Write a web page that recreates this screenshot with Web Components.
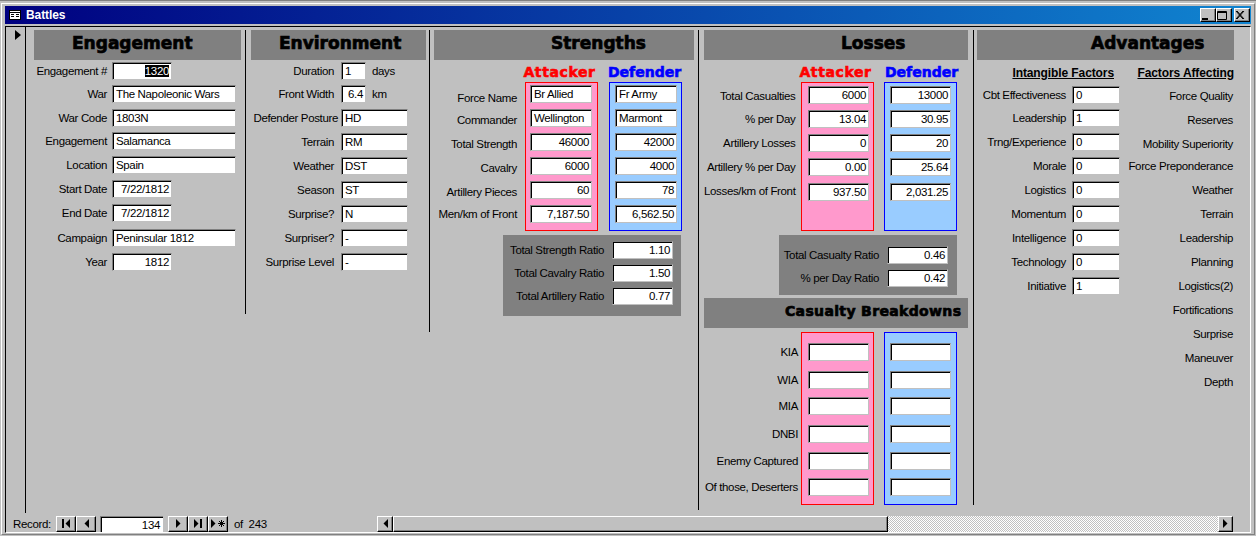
<!doctype html>
<html><head><meta charset="utf-8"><style>
html,body{margin:0;padding:0;background:#c0c0c0;}
body{width:1256px;height:536px;overflow:hidden;font:11.5px "Liberation Sans",Arial,sans-serif;letter-spacing:-.35px;color:#000;}
</style></head><body>
<template id="t-window"><style>
:host{display:flex;flex-direction:column;width:1256px;height:536px;box-sizing:border-box;background:#c0c0c0;padding:2px 1px 1px 1px;border-top:1px solid #808080}
.outer{flex:1;display:flex;flex-direction:column;border:1px solid;border-color:#fff #808080 #808080 #fff;padding:2px 3px 1px 3px;min-height:0}
.title{height:18px;flex:none;display:flex;align-items:center;background:linear-gradient(90deg,#000080,#1084d0);color:#fff;font:bold 12px "Liberation Sans",Arial,sans-serif;letter-spacing:-.1px;padding:0 1px 0 4px;}
.title svg{margin-right:5px;flex:none}
.title span{flex:1}
.client{flex:1;min-height:0;margin-top:2px;border:1px solid;border-color:#000 #fff #fff #000;display:flex;flex-direction:column}
.main{flex:1;display:flex;min-height:0}
.sel{width:10px;flex:none;border-right:1px solid #000;padding:3px 0 0 9px;box-sizing:content-box;height:calc(100% - 5px)}
.sel svg{display:block}
.canvas{flex:1;min-width:0;}
.foot{height:17px;flex:none}
.tb{width:16px;height:14px;background:#c0c0c0;border:1px solid;border-color:#fff #000 #000 #fff;box-sizing:border-box;box-shadow:inset -1px -1px 0 #808080;display:flex;align-items:center;justify-content:center}
.tb.x{margin-left:2px}
</style><div class="outer">
<div class="title"><svg width="12" height="10" viewBox="0 0 12 10"><rect x=".5" y=".5" width="11" height="9" fill="#fff" stroke="#000"/><path d="M1 2.500h10" stroke="#000"/><path d="M2 4.500h3M2 6.500h3M7 4.500h3M7 6.500h3" stroke="#000"/></svg><span></span>
<div class="tb"><svg width="10" height="9"><rect x="1" y="7" width="6" height="2"/></svg></div><div class="tb"><svg width="10" height="9"><path d="M.5 .5h9v8h-9z M.5 1.500h9" fill="none" stroke="#000"/></svg></div><div class="tb x"><svg width="10" height="9"><path d="M1 0l7 8M2 0l7 8M8 0L1 8M9 0L2 8" stroke="#000" fill="none" stroke-width="1"/></svg></div></div>
<div class="client"><div class="main"><div class="sel"><svg width="7" height="10"><path d="M0 0l6 5L0 10z"/></svg></div><div class="canvas"><slot></slot></div></div><div class="foot"><slot name="foot"></slot></div></div>
</div></template>

<template id="t-canvas"><style>
:host{display:flex;align-items:flex-start;padding-left:8px;height:100%;box-sizing:border-box;padding-top:3px}
</style><slot></slot></template>

<template id="t-divider"><style>:host{display:block;flex:none;width:1px;background:#000}</style></template>

<template id="t-section"><style>
:host{display:block;flex:none}
h2{margin:0;height:30px;background:#808080;display:flex;align-items:center;box-sizing:border-box;padding-bottom:4px;font:bold 17px "DejaVu Sans",sans-serif;letter-spacing:0;-webkit-text-stroke:.7px #000;white-space:nowrap}
</style><h2></h2><slot></slot></template>

<template id="t-rows"><style>
:host{display:grid;grid-auto-rows:24px;align-items:start}
</style><slot></slot></template>

<template id="t-field"><style>
:host{display:flex;align-items:center;height:18px;white-space:nowrap}
.l{flex:none;text-align:right;}
.s{margin-left:6px}
</style><span class="l"></span><x-input></x-input><span class="s"></span></template>

<template id="t-label"><style>
:host{display:block;height:18px;line-height:18px;text-align:right;white-space:nowrap}
</style><slot></slot></template>

<template id="t-input"><style>
:host{display:block;flex:none;height:18px;box-sizing:border-box;background:#fff;border:1px solid;border-color:#808080 #c0c0c0 #c0c0c0 #808080;box-shadow:inset 1px 1px 0 #000;font:11.5px "Liberation Sans",Arial,sans-serif;letter-spacing:-.35px;line-height:14px;padding:1px 2px 0 3px;overflow:hidden;white-space:nowrap}
:host([align=right]){text-align:right}
::slotted(mark){background:#000;color:#fff}
</style><slot></slot></template>

<template id="t-panel"><style>
:host{display:block;box-sizing:border-box;flex:none;border:1px solid}
:host([tone=a]){background:#ff99cc;border-color:#f00}
:host([tone=d]){background:#99ccff;border-color:#00f}
:host([tone=g]){background:#808080;border-color:#808080}
</style><slot></slot></template>

<template id="t-side"><style>
:host{display:block;text-align:center;font:bold 14px "DejaVu Sans",sans-serif;-webkit-text-stroke:.6px currentColor;letter-spacing:0;white-space:nowrap}
:host([tone=a]){color:#f00;letter-spacing:.6px}
:host([tone=d]){color:#00f}
</style><slot></slot></template>

<template id="t-sub"><style>
:host{display:block;font:bold 12px "Liberation Sans",Arial,sans-serif;letter-spacing:-.1px;text-decoration:underline;text-align:right;white-space:nowrap;height:16px;line-height:16px}
</style><slot></slot></template>

<template id="t-navbtn"><style>
:host{display:flex;align-items:center;justify-content:center;flex:none;width:20px;height:16px;box-sizing:border-box;background:#c0c0c0;border:1px solid;border-color:#fff #000 #000 #fff;box-shadow:inset -1px -1px 0 #808080}
</style><slot></slot></template>

<template id="t-nav"><style>
:host{display:flex;align-items:center;height:17px;padding-left:7px;white-space:nowrap;}
.rec{width:43px;flex:none}
.box{width:63px;height:16px;box-sizing:border-box;background:#fff;margin:0 5px 0 4px;border-top:1px solid #808080;border-left:1px solid #808080;box-shadow:inset 1px 1px 0 #000;text-align:right;padding:1px 3px 0 0;line-height:15px;flex:none}
.of{margin-left:6px;flex:none;width:143px}
.track{flex:1;margin:0 17px 0 0;display:flex;height:16px;min-width:0}
.thumb{width:495px;flex:none;background:#c0c0c0;border:1px solid;border-color:#fff #000 #000 #fff;box-shadow:inset -1px -1px 0 #808080;box-sizing:border-box}
.dith{flex:1;background:repeating-conic-gradient(#fff 0 25%,#c0c0c0 0 50%) 0 0/2px 2px}
</style><span class="rec">Record:</span>
<x-navbtn><svg width="8" height="9"><path d="M0 0h2v9H0zM8 0v9L3.500 4.500z"/></svg></x-navbtn><x-navbtn><svg width="5" height="9"><path d="M5 0v9L.500 4.500z"/></svg></x-navbtn>
<div class="box">134</div>
<x-navbtn><svg width="5" height="9"><path d="M0 0v9l4.500-4.500z"/></svg></x-navbtn><x-navbtn><svg width="8" height="9"><path d="M0 0v9l4.500-4.500zM6 0h2v9H6z"/></svg></x-navbtn><x-navbtn><svg width="15" height="9"><path d="M0 0v9l4.500-4.500z"/><path d="M10.500 1v7M7 4.500h7M8 2l5 5M13 2L8 7" stroke="#000" fill="none"/></svg></x-navbtn>
<span class="of">of&nbsp; 243</span>
<x-navbtn style="width:16px"><svg width="5" height="9"><path d="M5 0v9L.500 4.500z"/></svg></x-navbtn>
<div class="track"><div class="thumb"></div><div class="dith"></div><x-navbtn style="width:15px"><svg width="5" height="9"><path d="M0 0v9l4.500-4.500z"/></svg></x-navbtn></div>
</template>

<script>
function def(tag,tid,init){customElements.define(tag,class extends HTMLElement{constructor(){super();this.attachShadow({mode:'open'}).appendChild(document.getElementById(tid).content.cloneNode(true));}connectedCallback(){if(init)init(this,this.shadowRoot);}});}
def('x-input','t-input');
def('x-window','t-window',(h,s)=>{s.querySelector('.title span').textContent=h.getAttribute('caption');});
def('x-canvas','t-canvas');
def('x-divider','t-divider',(h)=>{h.style.height=h.getAttribute('h')+'px';});
def('x-section','t-section',(h,s)=>{h.style.width=h.getAttribute('w')+'px';const t=s.querySelector('h2');t.textContent=h.getAttribute('heading');t.style.paddingLeft=h.getAttribute('pl')+'px';if(h.hasAttribute('fs'))t.style.fontSize=h.getAttribute('fs')+'px';if(h.hasAttribute('ls'))t.style.letterSpacing=h.getAttribute('ls')+'px';});
def('x-rows','t-rows',(h)=>{if(h.hasAttribute('rows'))h.style.gridTemplateRows=h.getAttribute('rows');});
def('x-label','t-label');
def('x-sub','t-sub');
def('x-field','t-field',(h,s)=>{
 const p=h.parentElement,g=n=>h.getAttribute(n)||p.getAttribute(n);
 const l=s.querySelector('.l');l.textContent=h.getAttribute('label')||'';l.style.width=(g('lw')||0)+'px';l.style.marginRight=(g('g')||0)+'px';
 const i=s.querySelector('x-input');
 if(g('w'))i.style.width=g('w')+'px';
 const v=h.getAttribute('v')||'';
 if(h.hasAttribute('sel')){const m=document.createElement('mark');m.textContent=v;i.appendChild(m);}else i.textContent=v;
 if(h.getAttribute('a')==='r')i.setAttribute('align','right');
 s.querySelector('.s').textContent=h.getAttribute('suffix')||'';
});
def('x-panel','t-panel');
def('x-side','t-side');
def('x-navbtn','t-navbtn');
def('x-nav','t-nav');
</script>

<x-window caption="Battles">
<x-canvas>
<x-section w="207" heading="Engagement" pl="38">
 <x-rows lw="73" g="5" w="124" rows="23px 24px 23px 24px 24px 24px 25px 24px 24px" style="margin-top:2px">
  <x-field label="Engagement #" v="1320" w="60" a="r" sel></x-field>
  <x-field label="War" v="The Napoleonic Wars"></x-field>
  <x-field label="War Code" v="1803N"></x-field>
  <x-field label="Engagement" v="Salamanca"></x-field>
  <x-field label="Location" v="Spain"></x-field>
  <x-field label="Start Date" v="7/22/1812" w="60" a="r"></x-field>
  <x-field label="End Date" v="7/22/1812" w="60" a="r"></x-field>
  <x-field label="Campaign" v="Peninsular 1812"></x-field>
  <x-field label="Year" v="1812" w="60" a="r"></x-field>
 </x-rows>
</x-section>
<x-divider h="284" style="margin:0 5px 0 4px"></x-divider>
<x-section w="175" heading="Environment" pl="28">
 <x-rows lw="83" g="7" w="67" rows="23px repeat(8,24px)" style="margin-top:2px">
  <x-field label="Duration" v="1" w="25" suffix="days"></x-field>
  <x-field label="Front Width" v="6.4" w="25" a="r" suffix="km"></x-field>
  <x-field label="Defender Posture" v="HD" lw="87" g="3"></x-field>
  <x-field label="Terrain" v="RM"></x-field>
  <x-field label="Weather" v="DST"></x-field>
  <x-field label="Season" v="ST"></x-field>
  <x-field label="Surprise?" v="N"></x-field>
  <x-field label="Surpriser?" v="-"></x-field>
  <x-field label="Surprise Level" v="-"></x-field>
 </x-rows>
</x-section>
<x-divider h="302" style="margin:0 4px 0 3px"></x-divider>
<x-section w="260" heading="Strengths" pl="117">
 <div style="display:flex;margin-top:4px;height:16px;align-items:center;padding-left:84px">
  <x-side tone="a" style="width:83px;margin-right:7px">Attacker</x-side><x-side tone="d" style="width:73px">Defender</x-side>
 </div>
 <div style="display:flex;margin-top:2px;align-items:flex-start">
  <x-rows rows="22px 24px 24px 24px 22px 24px" style="width:83px;flex:none;padding-top:7px">
   <x-label>Force Name</x-label><x-label>Commander</x-label><x-label>Total Strength</x-label><x-label>Cavalry</x-label><x-label>Artillery Pieces</x-label><x-label>Men/km of Front</x-label>
  </x-rows>
  <div style="display:flex;flex-direction:column;margin-left:8px">
  <div style="display:flex;gap:11px">
   <x-panel tone="a" style="width:73px;height:149px;padding:2px 0 0 4px">
    <x-rows w="62">
     <x-field v="Br Allied"></x-field><x-field v="Wellington"></x-field><x-field v="46000" a="r"></x-field><x-field v="6000" a="r"></x-field><x-field v="60" a="r"></x-field><x-field v="7,187.50" a="r"></x-field>
    </x-rows>
   </x-panel>
   <x-panel tone="d" style="width:73px;height:149px;padding:2px 0 0 5px">
    <x-rows w="62">
     <x-field v="Fr Army"></x-field><x-field v="Marmont"></x-field><x-field v="42000" a="r"></x-field><x-field v="4000" a="r"></x-field><x-field v="78" a="r"></x-field><x-field v="6,562.50" a="r"></x-field>
    </x-rows>
   </x-panel>
  </div>
  <x-panel tone="g" style="width:178px;height:81px;margin:4px 0 0 -22px;padding-top:5px">
   <x-rows lw="100" g="8" w="61" rows="repeat(3,23px)">
    <x-field label="Total Strength Ratio" v="1.10" a="r"></x-field><x-field label="Total Cavalry Ratio" v="1.50" a="r"></x-field><x-field label="Total Artillery Ratio" v="0.77" a="r"></x-field>
   </x-rows>
  </x-panel>
  </div>
 </div>
</x-section>
<x-divider h="480" style="margin:0 5px 0 4px"></x-divider>
<x-section w="264" heading="Losses" pl="137">
 <div style="display:flex;margin-top:4px;height:16px;align-items:center;padding-left:95px">
  <x-side tone="a" style="width:73px;margin-right:13px">Attacker</x-side><x-side tone="d" style="width:73px">Defender</x-side>
 </div>
 <div style="display:flex;margin-top:2px;align-items:flex-start">
  <x-rows rows="23px repeat(4,24px)" style="width:91px;margin-right:6px;flex:none;padding-top:5px">
   <x-label>Total Casualties</x-label><x-label>% per Day</x-label><x-label>Artillery Losses</x-label><x-label>Artillery % per Day</x-label><x-label>Losses/km of Front</x-label>
  </x-rows>
  <x-panel tone="a" style="width:73px;height:149px;padding:3px 0 0 6px">
   <x-rows w="61" rows="24px 24px 24px 25px 24px">
    <x-field v="6000" a="r"></x-field><x-field v="13.04" a="r"></x-field><x-field v="0" a="r"></x-field><x-field v="0.00" a="r"></x-field><x-field v="937.50" a="r"></x-field>
   </x-rows>
  </x-panel>
  <x-panel tone="d" style="width:73px;height:149px;padding:3px 0 0 5px;margin-left:10px">
   <x-rows w="61" rows="24px 24px 24px 25px 24px">
    <x-field v="13000" a="r"></x-field><x-field v="30.95" a="r"></x-field><x-field v="20" a="r"></x-field><x-field v="25.64" a="r"></x-field><x-field v="2,031.25" a="r"></x-field>
   </x-rows>
  </x-panel>
 </div>
 <x-panel tone="g" style="width:178px;height:60px;margin:4px 0 0 75px;padding-top:10px">
  <x-rows lw="99" g="8" w="61" rows="repeat(2,23px)">
   <x-field label="Total Casualty Ratio" v="0.46" a="r"></x-field><x-field label="% per Day Ratio" v="0.42" a="r"></x-field>
  </x-rows>
 </x-panel>
 <x-section w="264" heading="Casualty Breakdowns" pl="81" fs="14" ls=".35" style="margin-top:3px"></x-section>
 <div style="display:flex;margin-top:4px;align-items:flex-start">
  <x-rows rows="28px 26px 28px 27px 26px 26px" style="width:94px;margin-right:3px;flex:none;padding-top:11px">
   <x-label>KIA</x-label><x-label>WIA</x-label><x-label>MIA</x-label><x-label>DNBI</x-label><x-label>Enemy Captured</x-label><x-label>Of those, Deserters</x-label>
  </x-rows>
  <x-panel tone="a" style="width:73px;height:173px;padding:10px 0 0 6px">
   <x-rows w="61" rows="28px 26px 28px 27px 26px 26px"><x-field></x-field><x-field></x-field><x-field></x-field><x-field></x-field><x-field></x-field><x-field></x-field></x-rows>
  </x-panel>
  <x-panel tone="d" style="width:73px;height:173px;padding:10px 0 0 5px;margin-left:10px">
   <x-rows w="61" rows="28px 26px 28px 27px 26px 26px"><x-field></x-field><x-field></x-field><x-field></x-field><x-field></x-field><x-field></x-field><x-field></x-field></x-rows>
  </x-panel>
 </div>
</x-section>
<x-divider h="475" style="margin:0 3px 0 5px"></x-divider>
<x-section w="257" heading="Advantages" pl="114">
 <div style="display:flex;margin-top:5px">
  <div style="width:143px;flex:none">
   <x-sub style="width:137px">Intangible Factors</x-sub>
   <x-rows lw="89" g="6" w="48" style="margin-top:5px" rows="23px repeat(8,24px)">
    <x-field label="Cbt Effectiveness" v="0"></x-field><x-field label="Leadership" v="1"></x-field><x-field label="Trng/Experience" v="0"></x-field><x-field label="Morale" v="0"></x-field><x-field label="Logistics" v="0"></x-field><x-field label="Momentum" v="0"></x-field><x-field label="Intelligence" v="0"></x-field><x-field label="Technology" v="0"></x-field><x-field label="Initiative" v="1"></x-field>
   </x-rows>
  </div>
  <div style="width:114px;flex:none">
   <x-sub>Factors Affecting</x-sub>
   <x-rows style="margin-top:6px;width:113px" rows="24px 24px 22px repeat(10,24px)">
    <x-label>Force Quality</x-label><x-label>Reserves</x-label><x-label>Mobility Superiority</x-label><x-label>Force Preponderance</x-label><x-label>Weather</x-label><x-label>Terrain</x-label><x-label>Leadership</x-label><x-label>Planning</x-label><x-label>Logistics(2)</x-label><x-label>Fortifications</x-label><x-label>Surprise</x-label><x-label>Maneuver</x-label><x-label>Depth</x-label>
   </x-rows>
  </div>
 </div>
</x-section>
</x-canvas>
<x-nav slot="foot"></x-nav>
</x-window>
</body></html>
